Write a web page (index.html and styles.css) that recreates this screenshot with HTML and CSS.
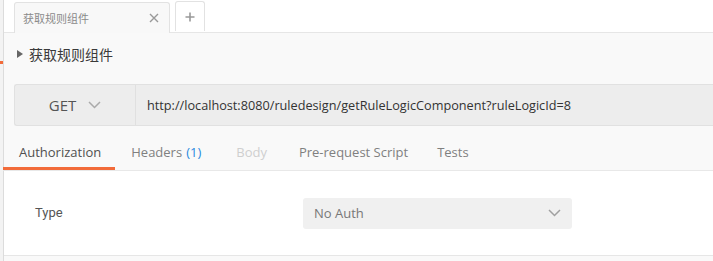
FILE: index.html
```html
<!DOCTYPE html>
<html lang="zh">
<head>
  <meta charset="UTF-8" />
  <title>获取规则组件</title>
  <link rel="stylesheet" href="styles.css">
</head>
<body>
  <div class="app">
    <div class="edge"><span class="edge-mark"></span></div>

    <div class="main">
      <div class="tabbar">
        <div class="req-tab">
          <span class="req-tab-name">获取规则组件</span>
          <svg class="req-tab-close" width="10" height="10" viewBox="0 0 10 10">
            <path d="M1 1 L9 9 M9 1 L1 9" stroke="#999" stroke-width="1.4" fill="none"/>
          </svg>
        </div>
        <div class="new-tab">
          <svg width="10" height="10" viewBox="0 0 10 10">
            <path d="M5 0.5 V9.5 M0.5 5 H9.5" stroke="#999" stroke-width="1.6" fill="none"/>
          </svg>
        </div>
      </div>

      <div class="req-name">
        <svg class="caret" width="6" height="8" viewBox="0 0 6 8">
          <path d="M0 0 L6 4 L0 8 Z" fill="#666"/>
        </svg>
        <span>获取规则组件</span>
      </div>

      <div class="urlbar">
        <div class="method">
          <span>GET</span>
          <svg width="13" height="8" viewBox="0 0 13 8">
            <polyline points="1,1 6.5,6.5 12,1" stroke="#aaa" stroke-width="1.5" fill="none"/>
          </svg>
        </div>
        <div class="url">http://localhost:8080/ruledesign/getRuleLogicComponent?ruleLogicId=8</div>
      </div>

      <div class="subtabs">
        <div class="subtab active">Authorization</div>
        <div class="subtab">Headers <span class="count">(1)</span></div>
        <div class="subtab muted">Body</div>
        <div class="subtab">Pre-request Script</div>
        <div class="subtab">Tests</div>
      </div>

      <div class="auth-body">
        <div class="auth-row">
          <span class="auth-label">Type</span>
          <div class="auth-select">
            <span>No Auth</span>
            <svg width="13" height="8" viewBox="0 0 13 8">
              <polyline points="1,1 6.5,6.5 12,1" stroke="#a0a0a0" stroke-width="1.5" fill="none"/>
            </svg>
          </div>
        </div>
      </div>
    </div>
  </div>
</body>
</html>
```

FILE: styles.css
```css
body {
  margin: 0;
  background: #f9f9f9;
  font-family: 'Open Sans', 'Noto Sans CJK SC', sans-serif;
  color: #505050;
  overflow: hidden;
}

.app {
  display: flex;
  min-height: 261px;
}

.edge {
  width: 3px;
  background: #f3f3f3;
  border-right: 1px solid #dcdcdc;
  display: flex;
  flex-direction: column;
}

.edge-mark {
  margin-top: 61px;
  width: 3px;
  height: 3px;
  background: #f26b3a;
}

.main {
  flex: 1;
  min-width: 0;
}

/* top request tabs */
.tabbar {
  height: 32px;
  background: #fff;
  border-bottom: 1px solid #e6e6e6;
  display: flex;
  align-items: flex-end;
  padding-left: 10px;
}

.req-tab {
  width: 156px;
  height: 31px;
  box-sizing: border-box;
  margin-bottom: -1px;
  background: #f8f8f8;
  border: 1px solid #e2e2e2;
  border-bottom: none;
  border-radius: 3px 3px 0 0;
  display: flex;
  align-items: center;
  justify-content: space-between;
  padding: 0 10px 0 8px;
}

.req-tab-name {
  font-family: 'Noto Sans CJK SC', sans-serif;
  font-size: 11px;
  color: #8a8a8a;
}

.new-tab {
  width: 30px;
  height: 30px;
  box-sizing: border-box;
  margin-left: 5px;
  margin-bottom: 1px;
  background: #fff;
  border: 1px solid #e2e2e2;
  border-bottom: none;
  border-radius: 3px 3px 0 0;
  display: flex;
  align-items: center;
  justify-content: center;
}

/* request name */
.req-name {
  height: 41px;
  display: flex;
  align-items: center;
  gap: 6px;
  padding-left: 13px;
  font-family: 'Noto Sans CJK SC', sans-serif;
  font-size: 14px;
  font-weight: 400;
  color: #3a3a3a;
}

/* url bar */
.urlbar {
  margin: 10px 0 0 10px;
  height: 42px;
  box-sizing: border-box;
  background: #ededed;
  border: 1px solid #e1e1e1;
  border-right: none;
  border-radius: 3px 0 0 3px;
  display: flex;
  align-items: center;
}

.method {
  width: 121px;
  height: 100%;
  box-sizing: border-box;
  border-right: 1px solid #e0e0e0;
  display: flex;
  align-items: center;
  justify-content: center;
  gap: 12px;
  font-size: 15px;
  color: #555;
}

.url {
  padding-left: 11px;
  font-size: 12.7px;
  color: #333;
  white-space: nowrap;
}

/* sub tabs */
.subtabs {
  height: 44px;
  display: flex;
  border-bottom: 1px solid #e8e8e8;
  margin-left: -1px;
}

.subtab {
  padding: 10px 16px 0;
  display: flex;
  align-items: center;
  font-size: 13px;
  color: #808080;
  border-bottom: 3px solid transparent;
}

.subtab.active {
  color: #505050;
  border-bottom-color: #f26b3a;
  padding-right: 14px;
}

.subtab.muted {
  color: #cfcfcf;
  padding-left: 19px;
}

.subtab.last {
  padding-left: 14px;
}

.subtab:last-child {
  padding-left: 13px;
}

.count {
  color: #2a8ae0;
  margin-left: 4px;
}

/* auth panel */
.auth-body {
  background: #fff;
  height: 84px;
  border-bottom: 1px solid #e6e6e6;
  display: flex;
  align-items: center;
}

.auth-row {
  display: flex;
  align-items: center;
  padding-left: 31px;
}

.auth-label {
  width: 268px;
  font-family: Roboto, sans-serif;
  font-size: 13px;
  color: #555;
  padding-bottom: 1px;
}

.auth-select {
  width: 269px;
  height: 31px;
  box-sizing: border-box;
  background: #f0f0f0;
  border-radius: 3px;
  display: flex;
  align-items: center;
  justify-content: space-between;
  padding: 0 11px;
  font-size: 13px;
  color: #777;
}
```
